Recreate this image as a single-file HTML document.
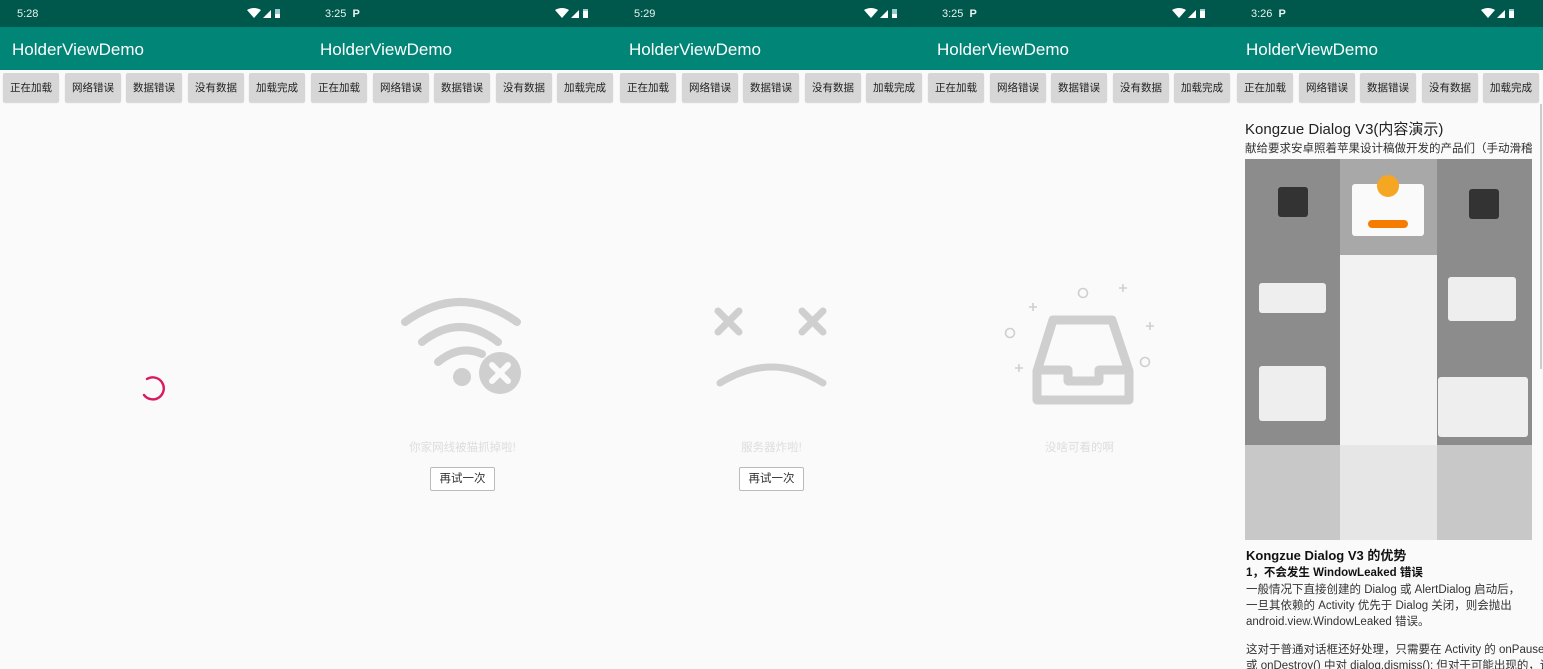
<!DOCTYPE html>
<html><head><meta charset="utf-8"><style>
*{margin:0;padding:0;box-sizing:border-box}
body{width:1543px;height:669px;overflow:hidden;background:#fafafa;font-family:"Liberation Sans","Noto Sans CJK SC",sans-serif;position:relative}
.p{position:absolute;top:0;width:309px;height:669px;overflow:hidden;background:#fafafa}
.sb{position:absolute;top:0;left:0;right:0;height:27px;background:#00574b;color:#e8f2f0;font-size:11px}
.sb .t{position:absolute;left:17px;top:8px}
.sb .ic{position:absolute;right:18px;top:8px;width:44px;height:11px}
.ab{position:absolute;top:27px;left:0;right:0;height:43px;background:#008577;color:#fff;font-size:17px;padding:13px 0 0 12px}
.bt{position:absolute;top:73px;height:29px;width:56px;background:#d6d6d6;color:#222;font-size:10.5px;text-align:center;line-height:30px;border-radius:2px;box-shadow:0 1px 1px rgba(0,0,0,.15)}
.msg{position:absolute;left:0;right:0;top:439px;text-align:center;color:#ddd;font-size:11.5px}
.rb{position:absolute;top:467px;width:65px;height:24px;border:1px solid #bbb;background:#fff;font-size:11.5px;text-align:center;line-height:22px;color:#333;border-radius:2px}
</style></head><body>

<div class="p" style="left:0">
<div class="sb"><span class="t">5:28</span><svg class="ic" viewBox="0 0 44 11"><path d="M0 2 Q7 -2 14 2 L7 10Z" fill="#fff"/><path d="M16 10 L24 2 V10Z" fill="#fff"/><rect x="28" y="1" width="5" height="9" fill="#9cc"/><rect x="28" y="6" width="5" height="4" fill="#fff"/></svg></div>
<div class="ab">HolderViewDemo</div>
<div class="bt" style="left:3px">正在加载</div><div class="bt" style="left:65px">网络错误</div><div class="bt" style="left:126px">数据错误</div><div class="bt" style="left:188px">没有数据</div><div class="bt" style="left:249px">加载完成</div>
<svg style="position:absolute;left:138px;top:371px" width="32" height="32" viewBox="0 0 32 32"><path d="M9 8 A11 11 0 1 1 6 24" fill="none" stroke="#d81b60" stroke-width="2.4" stroke-linecap="round"/></svg>
</div>

<div class="p" style="left:308px">
<div class="sb"><span class="t">3:25 &nbsp;<b>P</b></span><svg class="ic" viewBox="0 0 44 11"><path d="M0 2 Q7 -2 14 2 L7 10Z" fill="#fff"/><path d="M16 10 L24 2 V10Z" fill="#fff"/><rect x="28" y="1" width="5" height="9" fill="#9cc"/><rect x="28" y="3" width="5" height="7" fill="#fff"/></svg></div>
<div class="ab">HolderViewDemo</div>
<div class="bt" style="left:3px">正在加载</div><div class="bt" style="left:65px">网络错误</div><div class="bt" style="left:126px">数据错误</div><div class="bt" style="left:188px">没有数据</div><div class="bt" style="left:249px">加载完成</div>
<svg style="position:absolute;left:92px;top:294px" width="126" height="102" viewBox="0 0 126 102">
<g fill="none" stroke="#cfcfcf" stroke-width="8" stroke-linecap="round">
<path d="M5 28 Q60 -12 117 28"/><path d="M22 48 Q60 18 98 48"/><path d="M38 68 Q60 50 82 60"/></g>
<circle cx="62" cy="83" r="9" fill="#cfcfcf"/>
<circle cx="100" cy="79" r="21" fill="#cfcfcf"/>
<path d="M92 71 L108 87 M108 71 L92 87" stroke="#fafafa" stroke-width="6" stroke-linecap="round"/>
</svg>
<div class="msg">你家网线被猫抓掉啦!</div>
<div class="rb" style="left:122px">再试一次</div>
</div>

<div class="p" style="left:617px">
<div class="sb"><span class="t">5:29</span><svg class="ic" viewBox="0 0 44 11"><path d="M0 2 Q7 -2 14 2 L7 10Z" fill="#fff"/><path d="M16 10 L24 2 V10Z" fill="#fff"/><rect x="28" y="1" width="5" height="9" fill="#9cc"/><rect x="28" y="6" width="5" height="4" fill="#fff"/></svg></div>
<div class="ab">HolderViewDemo</div>
<div class="bt" style="left:3px">正在加载</div><div class="bt" style="left:65px">网络错误</div><div class="bt" style="left:126px">数据错误</div><div class="bt" style="left:188px">没有数据</div><div class="bt" style="left:249px">加载完成</div>
<svg style="position:absolute;left:96px;top:306px" width="118" height="84" viewBox="0 0 118 84">
<g fill="none" stroke="#cfcfcf" stroke-width="7" stroke-linecap="round">
<path d="M5 5 L26 26 M26 5 L5 26"/><path d="M89 5 L110 26 M110 5 L89 26"/>
<path d="M7 77 Q59 45 110 77"/></g></svg>
<div class="msg">服务器炸啦!</div>
<div class="rb" style="left:122px">再试一次</div>
</div>

<div class="p" style="left:925px">
<div class="sb"><span class="t">3:25 &nbsp;<b>P</b></span><svg class="ic" viewBox="0 0 44 11"><path d="M0 2 Q7 -2 14 2 L7 10Z" fill="#fff"/><path d="M16 10 L24 2 V10Z" fill="#fff"/><rect x="28" y="1" width="5" height="9" fill="#9cc"/><rect x="28" y="3" width="5" height="7" fill="#fff"/></svg></div>
<div class="ab">HolderViewDemo</div>
<div class="bt" style="left:3px">正在加载</div><div class="bt" style="left:65px">网络错误</div><div class="bt" style="left:126px">数据错误</div><div class="bt" style="left:188px">没有数据</div><div class="bt" style="left:249px">加载完成</div>
<svg style="position:absolute;left:65px;top:275px" width="180" height="190" viewBox="0 0 180 190">
<g fill="none" stroke="#cfcfcf" stroke-width="1.6">
<circle cx="93" cy="18" r="4.5"/><circle cx="20" cy="58" r="4.5"/><circle cx="155" cy="87" r="4.5"/>
<path d="M39 32 h8 M43 28 v8 M129 13 h8 M133 9 v8 M156 51 h8 M160 47 v8 M25 93 h8 M29 89 v8"/></g>
<g fill="none" stroke="#cfcfcf" stroke-width="9" stroke-linejoin="round">
<path d="M63 45 H122 L139 96 V125 H47 V96 Z"/>
<path d="M47 95 H78 V106 H109 V95 H139"/></g></svg>
<div class="msg">没啥可看的啊</div>
</div>

<div class="p" style="left:1234px">
<div class="sb"><span class="t">3:26 &nbsp;<b>P</b></span><svg class="ic" viewBox="0 0 44 11"><path d="M0 2 Q7 -2 14 2 L7 10Z" fill="#fff"/><path d="M16 10 L24 2 V10Z" fill="#fff"/><rect x="28" y="1" width="5" height="9" fill="#9cc"/><rect x="28" y="3" width="5" height="7" fill="#fff"/></svg></div>
<div class="ab">HolderViewDemo</div>
<div class="bt" style="left:3px">正在加载</div><div class="bt" style="left:65px">网络错误</div><div class="bt" style="left:126px">数据错误</div><div class="bt" style="left:188px">没有数据</div><div class="bt" style="left:249px">加载完成</div>
<div style="position:absolute;right:1px;top:104px;width:2px;height:265px;background:#ccc"></div>
<div style="position:absolute;left:11px;top:118px;font-size:15px;color:#222">Kongzue Dialog V3(内容演示)</div>
<div style="position:absolute;left:11px;top:140px;font-size:11.5px;color:#333;white-space:nowrap">献给要求安卓照着苹果设计稿做开发的产品们（手动滑稽</div>
<div style="position:absolute;left:11px;top:159px;width:287px;height:381px;background:#8c8c8c;overflow:hidden">
 <div style="position:absolute;left:0;top:286px;width:287px;height:95px;background:#c8c8c8"></div>
 <div style="position:absolute;left:95px;top:0;width:97px;height:381px;background:#a8a8a8"></div>
 <div style="position:absolute;left:95px;top:96px;width:97px;height:190px;background:#f2f2f2"></div>
 <div style="position:absolute;left:95px;top:286px;width:97px;height:95px;background:#e6e6e6"></div>
 <div style="position:absolute;left:107px;top:25px;width:72px;height:52px;background:#fafafa;border-radius:3px"></div>
 <div style="position:absolute;left:132px;top:16px;width:22px;height:22px;background:#f5a623;border-radius:50%"></div>
 <div style="position:absolute;left:123px;top:61px;width:40px;height:8px;background:#f57c00;border-radius:4px"></div>
 <div style="position:absolute;left:33px;top:28px;width:30px;height:30px;background:#333;border-radius:3px"></div>
 <div style="position:absolute;left:224px;top:30px;width:30px;height:30px;background:#333;border-radius:3px"></div>
 <div style="position:absolute;left:14px;top:124px;width:67px;height:30px;background:#eee;border-radius:3px"></div>
 <div style="position:absolute;left:14px;top:207px;width:67px;height:55px;background:#eee;border-radius:3px"></div>
 <div style="position:absolute;left:203px;top:118px;width:68px;height:44px;background:#eee;border-radius:3px"></div>
 <div style="position:absolute;left:193px;top:218px;width:90px;height:60px;background:#eee;border-radius:3px"></div>
</div>
<div style="position:absolute;left:12px;top:545px;font-size:13px;font-weight:bold;color:#111">Kongzue Dialog V3 的优势</div>
<div style="position:absolute;left:12px;top:564px;font-size:11.5px;font-weight:bold;color:#111">1，不会发生 WindowLeaked 错误</div>
<div style="position:absolute;left:12px;top:582px;font-size:11.5px;line-height:16px;color:#333;white-space:nowrap">一般情况下直接创建的 Dialog 或 AlertDialog 启动后，<br>一旦其依赖的 Activity 优先于 Dialog 关闭，则会抛出<br>android.view.WindowLeaked 错误。<br><span style="display:block;height:12px"></span>这对于普通对话框还好处理，只需要在 Activity 的 onPause()<br>或 onDestroy() 中对 dialog.dismiss(); 但对于可能出现的，诸</div>
</div>
</body></html>
